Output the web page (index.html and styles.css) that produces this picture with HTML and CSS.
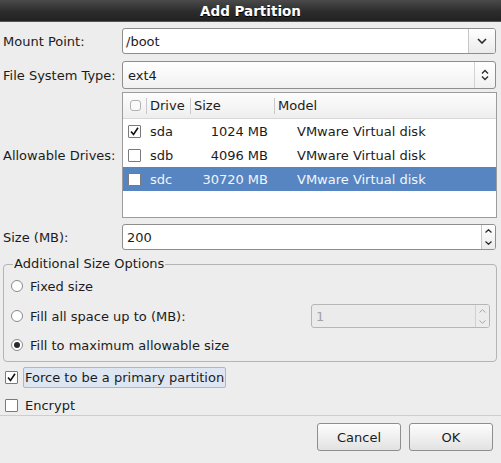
FILE: index.html
```html
<!DOCTYPE html>
<html>
<head>
<meta charset="utf-8">
<title>Add Partition</title>
<link rel="stylesheet" href="styles.css">
</head>
<body>
<div class="dialog">
  <div class="titlebar">Add Partition</div>
  <div class="content">
    <div class="row r-mount">
      <div class="label">Mount Point:</div>
      <div class="combo">
        <div class="combo-text">/boot</div>
        <div class="combo-btn mount-btn">
          <svg width="10" height="6" viewBox="0 0 10 6"><path d="M1 1 L5 5 L9 1" fill="none" stroke="#2a2a2a" stroke-width="1.6"/></svg>
        </div>
      </div>
    </div>

    <div class="row r-fs">
      <div class="label">File System Type:</div>
      <div class="combo combo-button">
        <div class="combo-text fs-text">ext4</div>
        <div class="combo-btn fs-btn">
          <svg width="8" height="12" viewBox="0 0 8 12"><path d="M1 4.5 L4 1.5 L7 4.5 M1 7.5 L4 10.5 L7 7.5" fill="none" stroke="#2a2a2a" stroke-width="1.3"/></svg>
        </div>
      </div>
    </div>

    <div class="row r-drives">
      <div class="label">Allowable Drives:</div>
      <div class="tree">
        <div class="tree-row tree-head">
          <div class="cell c-check"><span class="head-cb"></span></div>
          <div class="cell hcell">Drive</div>
          <div class="cell hcell">Size</div>
          <div class="cell hcell">Model</div>
        </div>
        <div class="tree-row">
          <div class="cell c-check"><span class="cb"><svg width="11" height="11" viewBox="0 0 11 11"><path d="M2 5.5 L4.5 8.5 L9 1.8" fill="none" stroke="#111" stroke-width="1.6"/></svg></span></div>
          <div class="cell c-drive">sda</div>
          <div class="cell c-size">1024 MB</div>
          <div class="cell c-model">VMware Virtual disk</div>
        </div>
        <div class="tree-row">
          <div class="cell c-check"><span class="cb"></span></div>
          <div class="cell c-drive">sdb</div>
          <div class="cell c-size">4096 MB</div>
          <div class="cell c-model">VMware Virtual disk</div>
        </div>
        <div class="tree-row selected">
          <div class="cell c-check"><span class="cb"></span></div>
          <div class="cell c-drive">sdc</div>
          <div class="cell c-size">30720 MB</div>
          <div class="cell c-model">VMware Virtual disk</div>
        </div>
      </div>
    </div>

    <div class="row r-size">
      <div class="label">Size (MB):</div>
      <div class="spin">
        <div class="spin-text">200</div>
        <div class="spin-arrows">
          <span><svg width="7" height="4" viewBox="0 0 7 4"><path d="M0.5 3.5 L3.5 0.7 L6.5 3.5" fill="none" stroke="#2a2a2a" stroke-width="1.2"/></svg></span>
          <span><svg width="7" height="4" viewBox="0 0 7 4"><path d="M0.5 0.5 L3.5 3.3 L6.5 0.5" fill="none" stroke="#2a2a2a" stroke-width="1.2"/></svg></span>
        </div>
      </div>
    </div>

    <fieldset class="frame">
      <legend>Additional Size Options</legend>
      <div class="opt">
        <span class="radio"></span><span>Fixed size</span>
      </div>
      <div class="opt opt2">
        <span class="radio"></span><span>Fill all space up to (MB):</span>
        <div class="spin spin-disabled">
          <div class="spin-text">1</div>
          <div class="spin-arrows">
            <span><svg width="7" height="4" viewBox="0 0 7 4"><path d="M0.5 3.5 L3.5 0.7 L6.5 3.5" fill="none" stroke="#a8a8a8" stroke-width="1"/></svg></span>
            <span><svg width="7" height="4" viewBox="0 0 7 4"><path d="M0.5 0.5 L3.5 3.3 L6.5 0.5" fill="none" stroke="#a8a8a8" stroke-width="1"/></svg></span>
          </div>
        </div>
      </div>
      <div class="opt opt3">
        <span class="radio on"><span class="dot"></span></span><span>Fill to maximum allowable size</span>
      </div>
    </fieldset>

    <div class="check-row force">
      <span class="cb"><svg width="11" height="11" viewBox="0 0 11 11"><path d="M2 5.5 L4.5 8.5 L9 1.8" fill="none" stroke="#111" stroke-width="1.6"/></svg></span>
      <span class="check-label focused">Force to be a primary partition</span>
    </div>
    <div class="check-row encrypt">
      <span class="cb"></span>
      <span class="check-label">Encrypt</span>
    </div>
  </div>
  <div class="footer">
    <button class="btn">Cancel</button>
    <button class="btn">OK</button>
  </div>
</div>
</body>
</html>
```

FILE: styles.css
```css
* { box-sizing: border-box; }
html, body { margin: 0; padding: 0; }
body {
  background: #ededed;
  font-family: "DejaVu Sans", sans-serif;
  font-size: 13px;
  color: #1c1c1c;
  width: 501px;
  height: 463px;
  overflow: hidden;
}
.dialog { width: 501px; height: 463px; }

.titlebar {
  height: 22px;
  background: linear-gradient(#4a4a4a, #2c2c2c 55%, #222222);
  border-bottom: 1px solid #4c5664;
  color: #ffffff;
  font-weight: bold;
  font-size: 13.5px;
  display: flex;
  align-items: center;
  justify-content: center;
  text-shadow: 0 1px 0 #000;
}

.content { padding: 0 4px 0 3px; }

.row {
  display: grid;
  grid-template-columns: 119px 1fr;
  align-items: center;
}
.r-mount { margin-top: 6px; height: 26px; }
.r-fs { margin-top: 7px; height: 28px; }
.r-drives { margin-top: 3px; height: 126px; }
.r-size { margin-top: 6px; height: 26px; }

.combo {
  height: 100%;
  display: flex;
  border: 1px solid #8e8e8e;
  border-radius: 3px;
  background: #ffffff;
  margin-right: 1px;
}
.combo-text {
  flex: 1;
  display: flex;
  align-items: center;
  padding-left: 3px;
}
.combo-btn {
  display: flex;
  align-items: center;
  justify-content: center;
  border-left: 1px solid #c6c6c6;
  background: linear-gradient(#ffffff, #ebebeb);
  border-radius: 0 2px 2px 0;
}
.mount-btn { width: 27px; }
.combo-button { background: linear-gradient(#ffffff, #f1f1f1); margin-right: 1px; }
.fs-text { padding-left: 5px; }
.fs-btn { width: 21px; background: transparent; border-left-color: #d2d2d2; }

.tree {
  height: 100%;
  border: 1px solid #9c9c9c;
  background: #ffffff;
}
.tree-row {
  display: grid;
  grid-template-columns: 23px 44px 84px 1fr;
  height: 24px;
  align-items: center;
}
.tree-head {
  height: 26px;
  background: linear-gradient(#fdfdfd, #eeeeee);
  border-bottom: 1px solid #d8d8d8;
}
.cell { display: flex; align-items: center; height: 100%; white-space: nowrap; }
.c-check { justify-content: center; }
.hcell::before {
  content: "";
  width: 1px;
  height: 16px;
  background: #c9c9c9;
  margin-right: 3px;
}
.head-cb {
  width: 11px;
  height: 11px;
  border: 1px solid #b2b2b2;
  border-radius: 3px;
  background: #fafafa;
  margin-left: 1px;
}
.c-drive { padding-left: 4px; }
.c-size { justify-content: flex-end; padding-right: 6px; }
.c-model { padding-left: 23px; }
.selected { background: #5785c1; color: #f2f5fa; }

.cb {
  width: 13px;
  height: 13px;
  border: 1px solid #7a7a7a;
  border-radius: 1px;
  background: #ffffff;
  display: inline-flex;
  align-items: center;
  justify-content: center;
  flex: none;
}

.spin {
  height: 100%;
  display: flex;
  border: 1px solid #8e8e8e;
  border-radius: 3px;
  background: #ffffff;
  margin-right: 1px;
}
.spin-text {
  flex: 1;
  display: flex;
  align-items: center;
  padding-left: 4px;
}
.spin-arrows {
  width: 14px;
  border-left: 1px solid #c6c6c6;
  display: flex;
  flex-direction: column;
  background: linear-gradient(#ffffff, #ebebeb);
  border-radius: 0 2px 2px 0;
}
.spin-arrows span {
  flex: 1;
  display: flex;
  align-items: center;
  justify-content: center;
}

.frame {
  margin: 6px 0 0 0;
  padding: 2px 6px 4px 7px;
  border: 1px solid #b4b4b4;
  border-radius: 4px;
  min-width: 0;
}
.frame legend {
  padding: 0 1px;
  margin-left: 2px;
  line-height: 16px;
}
.opt {
  display: flex;
  align-items: center;
  height: 24px;
}
.opt2 { margin-top: 6px; }
.opt3 { margin-top: 5px; }
.radio {
  width: 12px;
  height: 12px;
  border-radius: 50%;
  border: 1px solid #8a8a8a;
  background: #ffffff;
  margin-right: 7px;
  display: inline-flex;
  align-items: center;
  justify-content: center;
  flex: none;
}
.radio .dot {
  width: 6px;
  height: 6px;
  border-radius: 50%;
  background: #2a2a2a;
}
.spin-disabled {
  margin-left: auto;
  width: 179px;
  height: 24px;
  margin-right: 0;
  background: #ebebeb;
  border-color: #b6b6b6;
  color: #a2a2a2;
}
.spin-disabled .spin-arrows {
  background: #ececec;
  border-left-color: #d0d0d0;
}

.check-row {
  display: flex;
  align-items: center;
  padding-left: 2px;
}
.check-row .cb { margin-right: 5px; }
.force { margin-top: 5px; height: 21px; }
.encrypt { margin-top: 7px; height: 20px; }
.check-label {
  padding: 0 1px;
  border: 1px solid transparent;
  height: 21px;
  display: flex;
  align-items: center;
  border-radius: 2px;
}
.focused {
  background: #dde6f1;
  border-color: #a7b9d0;
}

.footer {
  border-top: 1px solid #cdcdcd;
  display: flex;
  justify-content: flex-end;
  gap: 8px;
  padding: 7px 8px 0 0;
}
.btn {
  width: 84px;
  height: 28px;
  border: 1px solid #8e8e8e;
  border-radius: 3px;
  background: linear-gradient(#fdfdfd, #e2e2e2);
  font: inherit;
  color: #1c1c1c;
  padding: 0;
}
```
